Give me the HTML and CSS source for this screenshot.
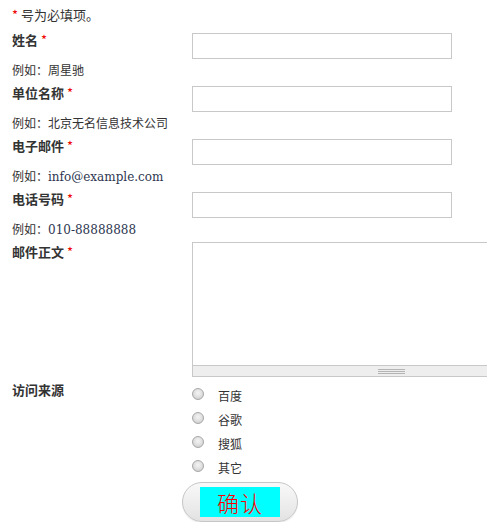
FILE: index.html
```html
<!DOCTYPE html>
<html>
<head>
<meta charset="utf-8">
<link rel="stylesheet" href="styles.css">
</head>
<body>
<div class="page">
  <p class="note"><span class="req">*</span> 号为必填项。</p>
  <form class="form">
    <div class="row">
      <div class="lab"><b>姓名</b> <span class="req">*</span><div class="hint">例如：周星驰</div></div>
      <div class="field"><input class="txt" type="text"></div>
    </div>
    <div class="row">
      <div class="lab"><b>单位名称</b> <span class="req">*</span><div class="hint">例如：北京无名信息技术公司</div></div>
      <div class="field"><input class="txt" type="text"></div>
    </div>
    <div class="row">
      <div class="lab"><b>电子邮件</b> <span class="req">*</span><div class="hint">例如：<span class="lat">info@example.com</span></div></div>
      <div class="field"><input class="txt" type="text"></div>
    </div>
    <div class="row">
      <div class="lab"><b>电话号码</b> <span class="req">*</span><div class="hint">例如：<span class="lat">010-88888888</span></div></div>
      <div class="field"><input class="txt" type="text"></div>
    </div>
    <div class="row row-area">
      <div class="lab"><b>邮件正文</b> <span class="req">*</span></div>
      <div class="field">
        <div class="editor">
          <textarea class="area"></textarea>
          <div class="status"><span class="grip"></span></div>
        </div>
      </div>
    </div>
    <div class="row row-radio">
      <div class="lab"><b>访问来源</b></div>
      <div class="field radios">
        <label class="opt"><input type="radio" name="src"><span>百度</span></label>
        <label class="opt"><input type="radio" name="src"><span>谷歌</span></label>
        <label class="opt"><input type="radio" name="src"><span>搜狐</span></label>
        <label class="opt"><input type="radio" name="src"><span>其它</span></label>
      </div>
    </div>
    <div class="actions">
      <button class="btn" type="button"><span class="btn-face">确认</span></button>
    </div>
  </form>
</div>
</body>
</html>
```
FILE: styles.css
```css
html, body {
  margin: 0;
  padding: 0;
  overflow: hidden;
  background: #fff;
}
body {
  font-family: "Noto Sans CJK SC", sans-serif;
  color: #333;
  font-size: 13px;
}
.page {
  padding: 5px 0 0 12px;
}
.note {
  margin: 0;
  line-height: 20px;
  font-size: 13px;
}
.req {
  color: #e00;
  font-weight: normal;
}
.form {
  margin-top: 5px;
}
.row {
  display: grid;
  grid-template-columns: 180px 1fr;
  height: 53px;
}
.lab {
  line-height: 20px;
  font-size: 13px;
}
.lab b {
  font-weight: 700;
}
.hint {
  margin-top: 10px;
  font-size: 12px;
  line-height: 20px;
}
.lat {
  font-family: "DejaVu Serif", serif;
  font-size: 12px;
  color: #2d3650;
}
.field {
  min-width: 0;
}
.txt {
  display: block;
  box-sizing: border-box;
  width: 260px;
  height: 26px;
  margin: 3px 0 0;
  border: 1px solid #c8c8c8;
  padding: 2px 4px;
  outline: none;
  background: #fff;
}
.row-area {
  height: auto;
}
.editor {
  box-sizing: border-box;
  width: 295px;
  height: 135px;
  border: 1px solid #c8c8c8;
  border-right: 0;
  display: flex;
  flex-direction: column;
}
.area {
  flex: 1;
  border: 0;
  margin: 0;
  padding: 4px;
  resize: none;
  outline: none;
  display: block;
}
.status {
  height: 10px;
  border-top: 1px solid #c8c8c8;
  background: #eee;
  display: flex;
  align-items: center;
  padding-left: 185px;
}
.grip {
  width: 27px;
  height: 5px;
  border-top: 1px solid #b4b4b4;
  border-bottom: 1px solid #b4b4b4;
  box-sizing: border-box;
  background: linear-gradient(#eee 0 1px, #b4b4b4 1px 2px, #eee 2px);
}
.row-radio {
  height: auto;
  margin-top: 3px;
}
.radios {
  display: flex;
  flex-direction: column;
  padding-top: 4px;
}
.opt {
  display: flex;
  align-items: center;
  height: 24px;
  font-size: 12px;
}
.opt input {
  appearance: none;
  -webkit-appearance: none;
  width: 12px;
  height: 12px;
  margin: 0 14px 0 0;
  border-radius: 50%;
  border: 1px solid #a8a8a8;
  box-sizing: border-box;
  background: radial-gradient(circle at 50% 40%, #f4f4f4 0, #e2e2e2 45%, #c4c4c4 100%);
  position: relative;
  top: -2px;
}
.opt span {
  line-height: 20px;
}
.actions {
  padding: 2px 0 0 170px;
}
.btn {
  width: 116px;
  height: 40px;
  border-radius: 20px;
  border: 1px solid #c6c6c6;
  background: linear-gradient(#f8f8f8, #ececec 60%, #e2e2e2);
  box-shadow: 0 1px 1px rgba(0,0,0,0.08);
  padding: 0;
  display: flex;
  align-items: center;
  justify-content: center;
}
.btn-face {
  display: block;
  width: 80px;
  height: 30px;
  background: #00ffff;
  color: #f00;
  font-family: "Noto Sans CJK SC", serif;
  font-weight: 300;
  font-size: 22px;
  line-height: 30px;
  letter-spacing: 1px;
  text-align: center;
}
```
